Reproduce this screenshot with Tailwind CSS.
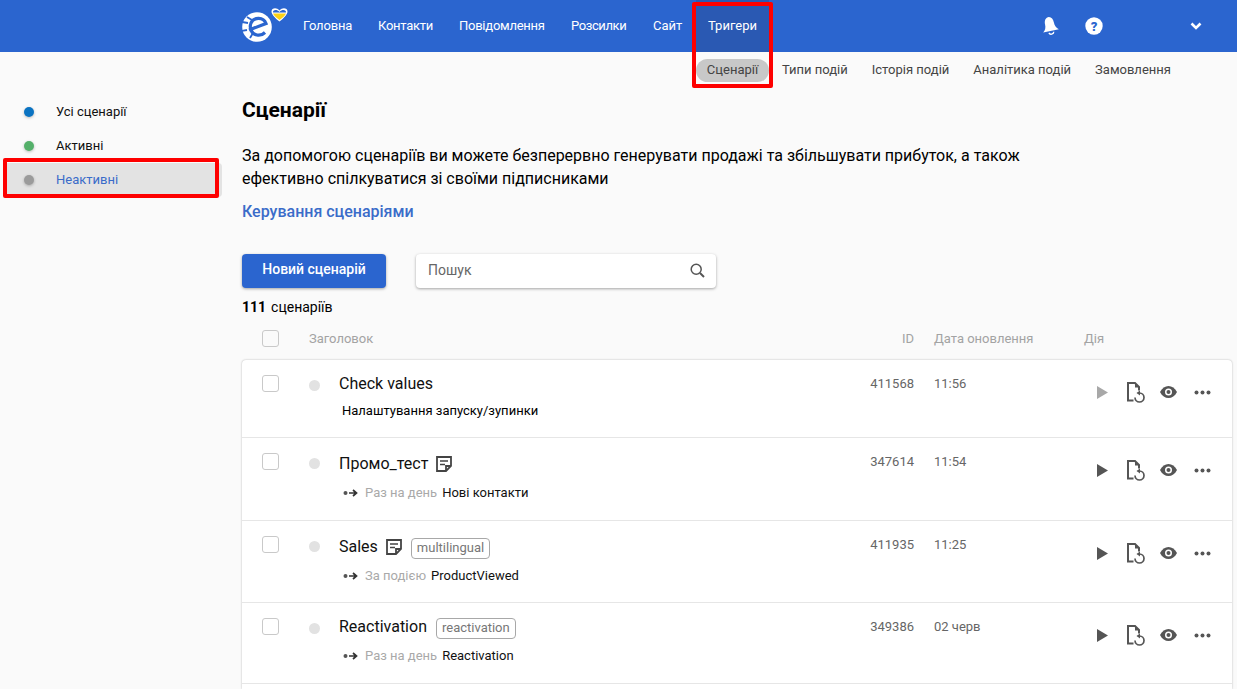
<!DOCTYPE html>
<html>
<head>
<meta charset="utf-8">
<script src="https://cdn.jsdelivr.net/npm/@tailwindcss/browser@4"></script>
</head>
<body class="m-0 bg-[#fafafa] font-['Roboto',sans-serif] text-[#111] overflow-hidden h-[689px] relative">
<header class="h-[52px] bg-[#2b65cf] flex items-center text-white text-[13px] font-normal">
  <div class="w-[242px] shrink-0"></div>
  <svg class="w-[50px] h-[52px] shrink-0" viewBox="0 0 50 52" width="50" height="52">
    <circle cx="15" cy="27" r="14.800" fill="#fff"/>
    <path d="M7 30 L24 23.500 C21.500 17 12 16.500 9 23 C7 28 9.500 34 15 35 C18 35.500 21 34.500 23 32.500" fill="none" stroke="#2b65cf" stroke-width="3.200"/>
    <path d="M0 22 L6 23 M-1 31 L5 30 M5 17 L10 20 M8 38 L11 33" stroke="#2b65cf" stroke-width="1.800"/>
    <path d="M37.500 21.500 C33 18 29.500 14.500 29.500 11.500 C29.500 8 34.500 7 37.500 10.500 C40.500 7 45.500 8 45.500 11.500 C45.500 14.500 42 18 37.500 21.500Z" fill="#fff"/>
    <path d="M31 12.500 C30.500 9.500 35 9 37.500 12 C40 9 44.500 9.500 44 12.500Z" fill="#2b65cf"/>
    <path d="M31 13.500 H44 C43 16 40 18 37.500 20 C35 18 32 16 31 13.500Z" fill="#fcd116"/>
  </svg>
  <div class="w-[11px] shrink-0"></div>
  <nav class="flex items-center h-full w-[466px] shrink-0">
    <a class="w-[75px] tracking-[-0.15px]">Головна</a>
    <a class="w-[81px] tracking-[-0.25px]">Контакти</a>
    <a class="w-[112px] tracking-[-0.25px]">Повідомлення</a>
    <a class="w-[82px] tracking-[-0.4px]">Розсилки</a>
    <a class="w-[43px]">Сайт</a>
    <a class="h-full w-[73px] flex items-center justify-center bg-[#2a59b3]">Тригери</a>
  </nav>
  <svg class="w-[18px] h-[20px] ml-[272px]" viewBox="0 0 18 20" width="18" height="20">
    <g transform="rotate(-12 9 10)">
      <path d="M9 1 C6 1 4.500 4 4.500 7.500 C4.500 11 3.500 13 1 15 H17 C14.500 13 13.500 11 13.500 7.500 C13.500 4 12 1 9 1Z" fill="#fff"/>
      <path d="M6.500 16.500 C7 19 11 19 11.500 16.500" fill="none" stroke="#fff" stroke-width="1.300"/>
    </g>
  </svg>
  <svg class="w-[18px] h-[18px] ml-[26px]" viewBox="0 0 18 18" width="18" height="18">
    <circle cx="9" cy="9" r="8.700" fill="#fff"/>
    <text x="9" y="13.600" text-anchor="middle" font-family="Roboto" font-weight="900" font-size="13" fill="#2b65cf">?</text>
  </svg>
  <svg class="w-[12px] h-[8px] ml-[87px]" viewBox="0 0 12 8" width="12" height="8">
    <path d="M1.500 1.500 L6 6 L10.500 1.500" fill="none" stroke="#fff" stroke-width="2.600"/>
  </svg>
</header>

<div class="h-[36px] flex items-center text-[13px] text-[#444] pl-[696px]">
  <span class="h-[23px] w-[73px] flex items-center justify-center rounded-full bg-[#c8c8c8] mr-[13px]">Сценарії</span>
  <span class="mr-[24px]">Типи подій</span>
  <span class="mr-[24px]">Історія подій</span>
  <span class="mr-[24px]">Аналітика подій</span>
  <span>Замовлення</span>
</div>

<div class="flex">
  <aside class="w-[242px] shrink-0 pt-[7px] text-[13px]">
    <div class="h-[34px] flex items-center pl-[24px]">
      <span class="w-[10px] h-[10px] rounded-full bg-[#0a73c2] shadow-[0_1px_3px_rgba(0,0,0,0.25)] mr-[22px]"></span>Усі сценарії
    </div>
    <div class="h-[34px] flex items-center pl-[24px]">
      <span class="w-[10px] h-[10px] rounded-full bg-[#54b06a] shadow-[0_1px_3px_rgba(0,0,0,0.25)] mr-[22px]"></span>Активні
    </div>
    <div class="h-[34px] flex items-center ml-[4px] w-[218px] bg-[#e3e3e3] rounded-[4px] pl-[20px] text-[#3a6cc9]">
      <span class="w-[10px] h-[10px] rounded-full bg-[#9b9b9b] shadow-[0_1px_3px_rgba(0,0,0,0.25)] mr-[22px]"></span>Неактивні
    </div>
  </aside>

  <main class="flex-1 min-w-0 pr-[5px]">
    <h1 class="text-[21px] leading-[24px] font-bold text-black mt-[10px]">Сценарії</h1>
    <p class="text-[16px] leading-[23px] text-black mt-[22px]">За допомогою сценаріїв ви можете безперервно генерувати продажі та збільшувати прибуток, а також<br>ефективно спілкуватися зі своїми підписниками</p>
    <a class="block text-[16px] leading-[20px] text-[#3a6cc9] mt-[12px] font-medium">Керування сценаріями</a>

    <div class="flex items-center mt-[32px]">
      <button class="w-[144px] h-[34px] rounded-[4px] bg-[#2b65cf] text-white text-[14px] font-medium shadow-[0_1px_3px_rgba(0,0,0,0.35)] pb-[4px]">Новий сценарій</button>
      <div class="ml-[30px] w-[300px] h-[34px] rounded-[4px] bg-white shadow-[0_1px_3px_rgba(0,0,0,0.35)] flex items-center justify-between pl-[12px] pr-[11px] text-[14px] text-[#666]">
        <span class="mb-[2px]">Пошук</span>
        <svg class="w-[15px] h-[15px] mb-[2px]" viewBox="0 0 15 15" width="15" height="15"><circle cx="6.200" cy="6.200" r="5" fill="none" stroke="#555" stroke-width="1.500"/><path d="M10 10 L14 14" stroke="#555" stroke-width="2"/></svg>
      </div>
    </div>

    <div class="text-[14px] leading-[18px] mt-[10px] text-black"><b class="font-bold mr-[5px]">111</b>сценаріїв</div>

    <div class="h-[36px] flex items-center text-[13px] text-[#a3a3a3] mt-[5px] mb-[3px]">
      <span class="w-[17px] h-[17px] border border-[#c9c9c9] rounded-[3px] ml-[20px] bg-[#fafafa] mb-[2px]"></span>
      <span class="ml-[30px]">Заголовок</span>
      <span class="ml-auto w-[16px] text-right">ID</span>
      <span class="ml-[20px] w-[150px]">Дата оновлення</span>
      <span class="w-[148px]">Дія</span>
    </div>

    <section class="bg-white rounded-t-[4px] shadow-[0_0_2px_rgba(0,0,0,0.3)] text-[13px]">
      <article class="h-[78px] flex border-b border-[#e6e6e6] relative">
        <div class="w-[97px] shrink-0 flex pt-[15px] pl-[20px]">
          <span class="w-[17px] h-[17px] border border-[#c9c9c9] rounded-[3px]"></span>
          <span class="w-[11px] h-[11px] rounded-full bg-[#e2e2e2] ml-[30px] mt-[5px]"></span>
        </div>
        <div class="flex-1 pt-[14px]">
          <div class="text-[16px] leading-[20px]">Check values</div>
          <div class="mt-[8px] ml-[3px] leading-[18px] text-black">Налаштування запуску/зупинки</div>
        </div>
        <div class="w-[75px] text-right pt-[15px] text-[#666] leading-[18px]">411568</div>
        <div class="w-[150px] pl-[20px] pt-[15px] text-[#666] leading-[18px] box-content">11:56</div>
        <div class="w-[148px] h-[64px] shrink-0 flex items-center pl-[13px]">
          <svg class="w-[11px] h-[13px] mr-[19px]" viewBox="0 0 12 14" width="11" height="13"><path d="M0 0 L12 7 L0 14Z" fill="#a8a8a8"/></svg>
          <svg class="w-[18px] h-[21px] mr-[15px]" viewBox="0 0 18 21" width="18" height="21"><path d="M6.500 18.500 H1 V1 H8 L12 5 V8.500" fill="none" stroke="#555" stroke-width="2"/><path d="M8 1 L12.500 5.500 H8Z" fill="#555"/><path d="M12.500 11 A4.500 4.500 0 1 1 8 15.500" fill="none" stroke="#555" stroke-width="1.700"/><path d="M9.500 11 L13 8.500 V13.500Z" fill="#555"/></svg>
          <svg class="w-[17px] h-[12px] mr-[17px]" viewBox="0 0 17 12" width="17" height="12"><path d="M0 6 C4 -2 13 -2 17 6 C13 14 4 14 0 6Z" fill="#555"/><circle cx="8.500" cy="6" r="3.500" fill="#fff"/><circle cx="8.500" cy="6" r="2" fill="#555"/></svg>
          <svg class="w-[17px] h-[5px]" viewBox="0 0 17 5" width="17" height="5"><circle cx="2.500" cy="2.500" r="2" fill="#555"/><circle cx="8.500" cy="2.500" r="2" fill="#555"/><circle cx="14.500" cy="2.500" r="2" fill="#555"/></svg>
        </div>
      </article>

      <article class="h-[83px] flex border-b border-[#e6e6e6]">
        <div class="w-[97px] shrink-0 flex pt-[15px] pl-[20px]">
          <span class="w-[17px] h-[17px] border border-[#c9c9c9] rounded-[3px]"></span>
          <span class="w-[11px] h-[11px] rounded-full bg-[#e2e2e2] ml-[30px] mt-[5px]"></span>
        </div>
        <div class="flex-1 pt-[16px]">
          <div class="text-[16px] leading-[20px] flex items-center">Промо_тест
            <svg class="w-[16px] h-[16px] ml-[8px]" viewBox="0 0 16 16" width="16" height="16"><path d="M1 1 H15 V10 L10 15 H1Z M10 15 V10 H15" fill="none" stroke="#444" stroke-width="1.800"/><path d="M4 5 H12 M4 8.500 H9" stroke="#444" stroke-width="1.600"/></svg>
          </div>
          <div class="mt-[10px] ml-[4px] leading-[18px] flex items-center">
            <svg class="w-[15px] h-[8px] mr-[7px]" viewBox="0 0 15 8" width="15" height="8"><circle cx="2.500" cy="4" r="2" fill="#555"/><path d="M6 4 H13 M10 1 L13.500 4 L10 7" fill="none" stroke="#333" stroke-width="1.700"/></svg>
            <span class="text-[#a9a9a9] mr-[5px]">Раз на день</span>Нові контакти
          </div>
        </div>
        <div class="w-[75px] text-right pt-[15px] text-[#666] leading-[18px]">347614</div>
        <div class="w-[150px] pl-[20px] pt-[15px] text-[#666] leading-[18px] box-content">11:54</div>
        <div class="w-[148px] h-[64px] shrink-0 flex items-center pl-[13px]">
          <svg class="w-[11px] h-[13px] mr-[19px]" viewBox="0 0 12 14" width="11" height="13"><path d="M0 0 L12 7 L0 14Z" fill="#555"/></svg>
          <svg class="w-[18px] h-[21px] mr-[15px]" viewBox="0 0 18 21" width="18" height="21"><path d="M6.500 18.500 H1 V1 H8 L12 5 V8.500" fill="none" stroke="#555" stroke-width="2"/><path d="M8 1 L12.500 5.500 H8Z" fill="#555"/><path d="M12.500 11 A4.500 4.500 0 1 1 8 15.500" fill="none" stroke="#555" stroke-width="1.700"/><path d="M9.500 11 L13 8.500 V13.500Z" fill="#555"/></svg>
          <svg class="w-[17px] h-[12px] mr-[17px]" viewBox="0 0 17 12" width="17" height="12"><path d="M0 6 C4 -2 13 -2 17 6 C13 14 4 14 0 6Z" fill="#555"/><circle cx="8.500" cy="6" r="3.500" fill="#fff"/><circle cx="8.500" cy="6" r="2" fill="#555"/></svg>
          <svg class="w-[17px] h-[5px]" viewBox="0 0 17 5" width="17" height="5"><circle cx="2.500" cy="2.500" r="2" fill="#555"/><circle cx="8.500" cy="2.500" r="2" fill="#555"/><circle cx="14.500" cy="2.500" r="2" fill="#555"/></svg>
        </div>
      </article>

      <article class="h-[82px] flex border-b border-[#e6e6e6]">
        <div class="w-[97px] shrink-0 flex pt-[15px] pl-[20px]">
          <span class="w-[17px] h-[17px] border border-[#c9c9c9] rounded-[3px]"></span>
          <span class="w-[11px] h-[11px] rounded-full bg-[#e2e2e2] ml-[30px] mt-[5px]"></span>
        </div>
        <div class="flex-1 pt-[13px]">
          <div class="text-[16px] leading-[20px] flex items-center">Sales
            <svg class="w-[16px] h-[16px] ml-[8px]" viewBox="0 0 16 16" width="16" height="16"><path d="M1 1 H15 V10 L10 15 H1Z M10 15 V10 H15" fill="none" stroke="#444" stroke-width="1.800"/><path d="M4 5 H12 M4 8.500 H9" stroke="#444" stroke-width="1.600"/></svg>
            <span class="ml-[9px] h-[21px] px-[5px] border border-[#a8a8a8] rounded-[4px] text-[13px] leading-[18px] text-[#777] mt-[4px]">multilingual</span>
          </div>
          <div class="mt-[8px] ml-[4px] leading-[18px] flex items-center">
            <svg class="w-[15px] h-[8px] mr-[7px]" viewBox="0 0 15 8" width="15" height="8"><circle cx="2.500" cy="4" r="2" fill="#555"/><path d="M6 4 H13 M10 1 L13.500 4 L10 7" fill="none" stroke="#333" stroke-width="1.700"/></svg>
            <span class="text-[#a9a9a9] mr-[5px]">За подією</span>ProductViewed
          </div>
        </div>
        <div class="w-[75px] text-right pt-[15px] text-[#666] leading-[18px]">411935</div>
        <div class="w-[150px] pl-[20px] pt-[15px] text-[#666] leading-[18px] box-content">11:25</div>
        <div class="w-[148px] h-[64px] shrink-0 flex items-center pl-[13px]">
          <svg class="w-[11px] h-[13px] mr-[19px]" viewBox="0 0 12 14" width="11" height="13"><path d="M0 0 L12 7 L0 14Z" fill="#555"/></svg>
          <svg class="w-[18px] h-[21px] mr-[15px]" viewBox="0 0 18 21" width="18" height="21"><path d="M6.500 18.500 H1 V1 H8 L12 5 V8.500" fill="none" stroke="#555" stroke-width="2"/><path d="M8 1 L12.500 5.500 H8Z" fill="#555"/><path d="M12.500 11 A4.500 4.500 0 1 1 8 15.500" fill="none" stroke="#555" stroke-width="1.700"/><path d="M9.500 11 L13 8.500 V13.500Z" fill="#555"/></svg>
          <svg class="w-[17px] h-[12px] mr-[17px]" viewBox="0 0 17 12" width="17" height="12"><path d="M0 6 C4 -2 13 -2 17 6 C13 14 4 14 0 6Z" fill="#555"/><circle cx="8.500" cy="6" r="3.500" fill="#fff"/><circle cx="8.500" cy="6" r="2" fill="#555"/></svg>
          <svg class="w-[17px] h-[5px]" viewBox="0 0 17 5" width="17" height="5"><circle cx="2.500" cy="2.500" r="2" fill="#555"/><circle cx="8.500" cy="2.500" r="2" fill="#555"/><circle cx="14.500" cy="2.500" r="2" fill="#555"/></svg>
        </div>
      </article>

      <article class="h-[81px] flex border-b border-[#e6e6e6]">
        <div class="w-[97px] shrink-0 flex pt-[15px] pl-[20px]">
          <span class="w-[17px] h-[17px] border border-[#c9c9c9] rounded-[3px]"></span>
          <span class="w-[11px] h-[11px] rounded-full bg-[#e2e2e2] ml-[30px] mt-[5px]"></span>
        </div>
        <div class="flex-1 pt-[11px]">
          <div class="text-[16px] leading-[20px] flex items-center">Reactivation
            <span class="ml-[9px] h-[21px] px-[5px] border border-[#a8a8a8] rounded-[4px] text-[13px] leading-[18px] text-[#777] mt-[4px]">reactivation</span>
          </div>
          <div class="mt-[8px] ml-[4px] leading-[18px] flex items-center">
            <svg class="w-[15px] h-[8px] mr-[7px]" viewBox="0 0 15 8" width="15" height="8"><circle cx="2.500" cy="4" r="2" fill="#555"/><path d="M6 4 H13 M10 1 L13.500 4 L10 7" fill="none" stroke="#333" stroke-width="1.700"/></svg>
            <span class="text-[#a9a9a9] mr-[5px]">Раз на день</span>Reactivation
          </div>
        </div>
        <div class="w-[75px] text-right pt-[15px] text-[#666] leading-[18px]">349386</div>
        <div class="w-[150px] pl-[20px] pt-[15px] text-[#666] leading-[18px] box-content">02 черв</div>
        <div class="w-[148px] h-[64px] shrink-0 flex items-center pl-[13px]">
          <svg class="w-[11px] h-[13px] mr-[19px]" viewBox="0 0 12 14" width="11" height="13"><path d="M0 0 L12 7 L0 14Z" fill="#555"/></svg>
          <svg class="w-[18px] h-[21px] mr-[15px]" viewBox="0 0 18 21" width="18" height="21"><path d="M6.500 18.500 H1 V1 H8 L12 5 V8.500" fill="none" stroke="#555" stroke-width="2"/><path d="M8 1 L12.500 5.500 H8Z" fill="#555"/><path d="M12.500 11 A4.500 4.500 0 1 1 8 15.500" fill="none" stroke="#555" stroke-width="1.700"/><path d="M9.500 11 L13 8.500 V13.500Z" fill="#555"/></svg>
          <svg class="w-[17px] h-[12px] mr-[17px]" viewBox="0 0 17 12" width="17" height="12"><path d="M0 6 C4 -2 13 -2 17 6 C13 14 4 14 0 6Z" fill="#555"/><circle cx="8.500" cy="6" r="3.500" fill="#fff"/><circle cx="8.500" cy="6" r="2" fill="#555"/></svg>
          <svg class="w-[17px] h-[5px]" viewBox="0 0 17 5" width="17" height="5"><circle cx="2.500" cy="2.500" r="2" fill="#555"/><circle cx="8.500" cy="2.500" r="2" fill="#555"/><circle cx="14.500" cy="2.500" r="2" fill="#555"/></svg>
        </div>
      </article>
      <div class="h-[5px]"></div>
    </section>
  </main>
</div>

<div class="absolute left-[692px] top-[2px] w-[81px] h-[86px] border-[4px] border-[#fe0000] rounded-[2px] pointer-events-none"></div>
<div class="absolute left-[3px] top-[158px] w-[216px] h-[40px] border-[4px] border-[#fe0000] rounded-[2px] pointer-events-none"></div>
</body>
</html>
